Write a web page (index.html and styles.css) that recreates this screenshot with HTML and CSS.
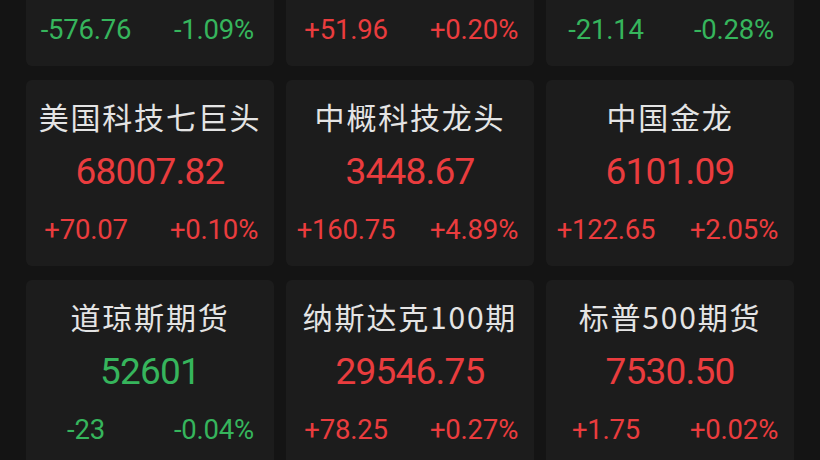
FILE: index.html
```html
<!DOCTYPE html>
<html lang="zh-CN">
<head>
<meta charset="utf-8">
<title>全球指数</title>
<link rel="stylesheet" href="styles.css">
</head>
<body>
<main class="board">
  <section class="quote down">
    <h2 class="name">道琼斯</h2>
    <div class="price">52337.36</div>
    <div class="change"><span>-576.76</span><span>-1.09%</span></div>
  </section>
  <section class="quote up">
    <h2 class="name">纳斯达克</h2>
    <div class="price">26032.12</div>
    <div class="change"><span>+51.96</span><span>+0.20%</span></div>
  </section>
  <section class="quote down">
    <h2 class="name">标普500</h2>
    <div class="price">7529.87</div>
    <div class="change"><span>-21.14</span><span>-0.28%</span></div>
  </section>

  <section class="quote up">
    <h2 class="name">美国科技七巨头</h2>
    <div class="price">68007.82</div>
    <div class="change"><span>+70.07</span><span>+0.10%</span></div>
  </section>
  <section class="quote up">
    <h2 class="name">中概科技龙头</h2>
    <div class="price">3448.67</div>
    <div class="change"><span>+160.75</span><span>+4.89%</span></div>
  </section>
  <section class="quote up">
    <h2 class="name">中国金龙</h2>
    <div class="price">6101.09</div>
    <div class="change"><span>+122.65</span><span>+2.05%</span></div>
  </section>

  <section class="quote down">
    <h2 class="name">道琼斯期货</h2>
    <div class="price">52601</div>
    <div class="change"><span>-23</span><span>-0.04%</span></div>
  </section>
  <section class="quote up">
    <h2 class="name">纳斯达克100期</h2>
    <div class="price">29546.75</div>
    <div class="change"><span>+78.25</span><span>+0.27%</span></div>
  </section>
  <section class="quote up">
    <h2 class="name">标普500期货</h2>
    <div class="price">7530.50</div>
    <div class="change"><span>+1.75</span><span>+0.02%</span></div>
  </section>
</main>
</body>
</html>
```

FILE: styles.css
```css
html, body {
  margin: 0;
  padding: 0;
  background: #141414;
  height: 100%;
  overflow: hidden;
}

body {
  font-family: Roboto, "Noto Sans CJK SC", sans-serif;
  -webkit-font-smoothing: antialiased;
}

/* three-column grid of quote tiles, scrolled so the first row is mostly out of view */
.board {
  display: grid;
  grid-template-columns: repeat(3, 248px);
  grid-auto-rows: 186px;
  column-gap: 12px;
  row-gap: 14px;
  padding-left: 26px;
  margin-top: -120px;
}

.quote {
  background: #1c1c1c;
  border-radius: 6px;
  display: flex;
  flex-direction: column;
  align-items: center;
  padding-top: 16px;
  box-sizing: border-box;
}

.name {
  margin: 0;
  height: 40px;
  line-height: 40px;
  font-family: "Noto Sans CJK SC", Roboto, sans-serif;
  font-weight: 400;
  font-size: 30px;
  letter-spacing: 1.8px;
  color: #e4e4e4;
  white-space: nowrap;
}

.price {
  margin-top: 14px;
  height: 44px;
  line-height: 44px;
  font-size: 37px;
  letter-spacing: -0.8px;
}

.change {
  margin-top: 18px;
  height: 36px;
  line-height: 36px;
  font-size: 27.5px;
  letter-spacing: -0.2px;
  align-self: stretch;
  margin-left: -4px;
  margin-right: -4px;
  display: grid;
  grid-template-columns: 1fr 1fr;
  text-align: center;
  white-space: nowrap;
}

.up .price,
.up .change { color: #ea3c3e; }

.down .price,
.down .change { color: #36b55c; }
```
